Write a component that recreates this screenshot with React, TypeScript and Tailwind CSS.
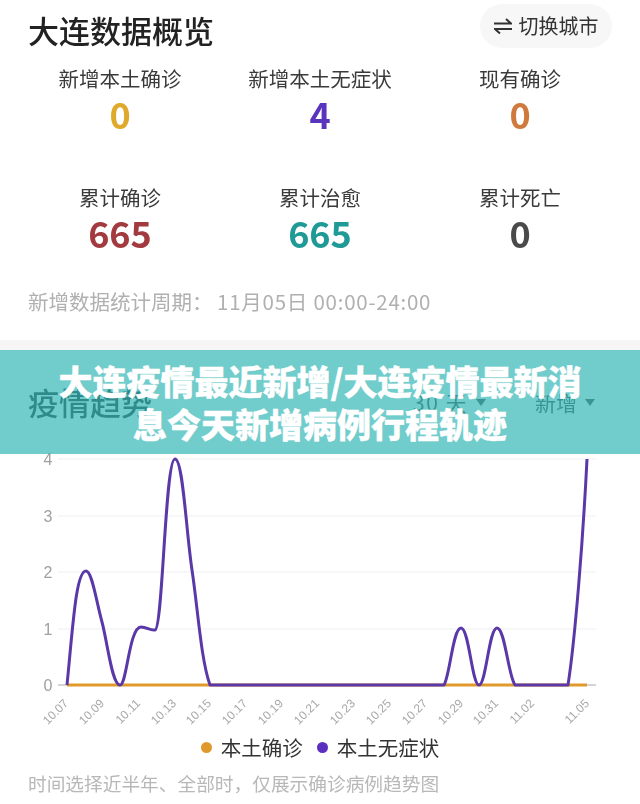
import React from 'react';

const font = { fontFamily: '"Noto Sans CJK SC", "Noto Sans", sans-serif' };

const stats = [
  { label: '新增本土确诊', value: '0', color: 'text-[#dfa92c]' },
  { label: '新增本土无症状', value: '4', color: 'text-[#5b34bd]' },
  { label: '现有确诊', value: '0', color: 'text-[#cf7a3c]' },
  { label: '累计确诊', value: '665', color: 'text-[#a23a40]' },
  { label: '累计治愈', value: '665', color: 'text-[#1f9a96]' },
  { label: '累计死亡', value: '0', color: 'text-[#4a4a4a]' },
];

const yLabels = [
  { t: '4', y: 459 },
  { t: '3', y: 516 },
  { t: '2', y: 572 },
  { t: '1', y: 629 },
  { t: '0', y: 685 },
];

const xLabels = [
  ['10.07', 67], ['10.09', 103], ['10.11', 139], ['10.13', 175], ['10.15', 210],
  ['10.17', 246], ['10.19', 282], ['10.21', 318], ['10.23', 354], ['10.25', 390],
  ['10.27', 426], ['10.29', 462], ['10.31', 497], ['11.02', 533], ['11.05', 588],
] as const;

const purpleLine =
  'M67 685 C73 625 76 571 86 571 C92 571 96 600 102 622 C108 645 112 685 120 685 C127 685 129 627 141 627 C147 627 150 631 155 630 C163 628 165 459 175 459 C183 459 186 530 192 570 C198 610 201 660 210 685 L444 685 C450 675 453 628 461 628 C469 628 472 685 479 685 C486 685 489 628 497 628 C505 628 508 675 515 685 L568 685 C575 640 583 540 587 459';

const Chart = () => (
  <svg viewBox="0 450 640 282" width={640} height={282} className="block">
    {yLabels.slice(0, 4).map((l) => (
      <line key={l.t} x1={58} x2={596} y1={l.y} y2={l.y} stroke="#f4f3f6" strokeWidth={1.5} />
    ))}
    <line x1={58} x2={596} y1={685} y2={685} stroke="#a9a9a9" strokeWidth={1} />
    {yLabels.map((l) => (
      <text key={l.t} x={48} y={l.y + 6} fontSize={16} fill="#a0a0a0" textAnchor="middle" fontFamily="Liberation Sans, sans-serif">
        {l.t}
      </text>
    ))}
    {xLabels.map(([t, x]) => (
      <text
        key={t}
        x={x + 2}
        y={704}
        fontSize={12}
        fill="#a8a8a8"
        textAnchor="end"
        fontFamily="Liberation Sans, sans-serif"
        transform={`rotate(-45 ${x + 2} 704)`}
      >
        {t}
      </text>
    ))}
    <line x1={67} x2={587} y1={685} y2={685} stroke="#e09a2b" strokeWidth={3} />
    <path d={purpleLine} fill="none" stroke="#5b38a8" strokeWidth={3} strokeLinejoin="round" />
  </svg>
);

export default function App() {
  return (
    <div className="relative h-[804px] w-[640px] overflow-hidden bg-white" style={font}>
      <div className="blur-[0.5px]">
        <div className="h-[340px] pr-[28px] pl-[28px]">
          <div className="flex h-[64px] items-start justify-between">
            <h1 className="pt-[8px] text-[31px] leading-[44px] font-medium text-[#222]">大连数据概览</h1>
            <div className="mt-[4px] flex h-[44px] w-[132px] items-center justify-center gap-[7px] rounded-[22px] bg-[#f7f7f7]">
              <svg width={18} height={16} viewBox="0 0 18 16" fill="none" stroke="#333" strokeWidth={2}>
                <path d="M0 5.5H17L12 1" />
                <path d="M18 11H1L6 15.5" />
              </svg>
              <span className="text-[20px] leading-none text-[#333]">切换城市</span>
            </div>
          </div>
          <div className="-mx-[8px] grid grid-cols-3 gap-y-[46px]">
            {stats.map((s) => (
              <div key={s.label} className="flex h-[73px] flex-col items-center">
                <span className="text-[20.5px] leading-[28px] whitespace-nowrap text-[#3a3a3a]">{s.label}</span>
                <span className={`text-[36px] leading-[43px] font-bold ${s.color}`}>{s.value}</span>
              </div>
            ))}
          </div>
          <p className="mt-[30px] text-[20.5px] leading-[30px] whitespace-nowrap text-[#b0b0b0]">
            新增数据统计周期： <span className="tracking-[0.75px]">11月05日 00:00-24:00</span>
          </p>
        </div>
        <div className="h-[10px] bg-[#f6f6f6]" />
        <div className="flex h-[100px] items-start justify-between pr-[45px] pl-[28px]">
          <h2 className="pt-[30px] text-[31px] leading-[44px] font-medium text-[#222]">疫情趋势</h2>
          <div className="flex gap-[49px] pt-[38px] text-[21px] leading-[28px] text-[#444]">
            <span className="flex items-center gap-[8px]">
              <span className="tracking-[1.5px]">30 天</span>
              <i className="h-0 w-0 border-x-[5px] border-t-[7px] border-x-transparent border-t-[#444]" />
            </span>
            <span className="flex items-center gap-[8px]">
              新增<i className="h-0 w-0 border-x-[5px] border-t-[7px] border-x-transparent border-t-[#444]" />
            </span>
          </div>
        </div>
        <Chart />
        <div className="flex items-center justify-center text-[20.5px] leading-[30px] text-[#333]">
          <i className="mr-[9px] h-[11px] w-[11px] rounded-full bg-[#e09a2b]" />
          <span>本土确诊</span>
          <i className="mr-[9px] ml-[14px] h-[11px] w-[11px] rounded-full bg-[#5b2fc0]" />
          <span>本土无症状</span>
        </div>
        <p className="pt-[7px] pl-[28px] text-[18.7px] leading-[28px] whitespace-nowrap text-[#b8b8b8]">
          时间选择近半年、全部时，仅展示确诊病例趋势图
        </p>
      </div>
      <div className="absolute top-[350px] left-0 flex h-[104px] w-[640px] items-center justify-center bg-[#35b6b7]/70 px-[50px] text-center text-[34px] leading-[43px] font-black text-white [-webkit-text-stroke:0.4px_white]">
        大连疫情最近新增/大连疫情最新消息今天新增病例行程轨迹
      </div>
    </div>
  );
}
